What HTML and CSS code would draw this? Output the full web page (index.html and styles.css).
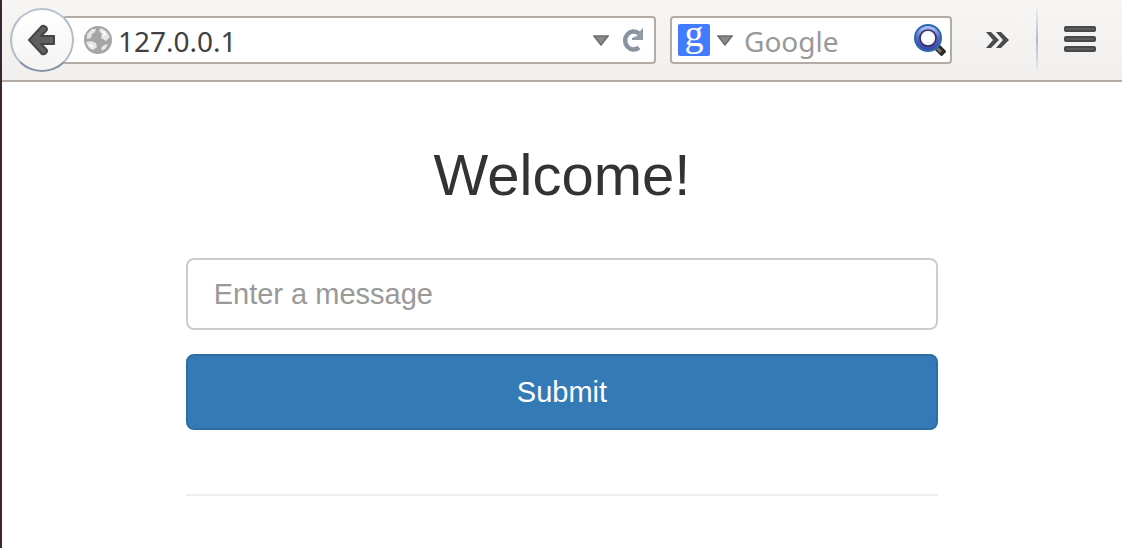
FILE: index.html
```html
<!DOCTYPE html>
<html lang="en">
<head>
<meta charset="utf-8">
<meta name="viewport" content="width=device-width, initial-scale=1">
<title>Welcome!</title>
<link rel="stylesheet" href="styles.css">
</head>
<body>
<div class="window">
  <header class="toolbar">
    <button class="back" type="button" aria-label="Back">
      <svg width="28" height="32" viewBox="0 0 28 32" aria-hidden="true">
        <path d="M1 16L14 2q2-1 4 1t0 4l-5 5h13v8H13l5 5q2 2 0 4t-4 1z" fill="#606060" stroke="#454545" stroke-width="2" stroke-linejoin="round"/>
      </svg>
    </button>
    <div class="field address">
      <svg class="globe" width="28" height="28" viewBox="0 0 28 28" aria-hidden="true">
        <circle cx="14" cy="14" r="14" fill="#a5a5a5"/>
        <path d="M3 8l5-5 4 0-1 3-3 2-1 4-4 1zM17 2l5 3 4 6-4 4-5-3 1-4-3-3zM2 16l5-1 5 2 1 4-4 3-4-2zM20 19l4-1-2 4-4 3-1-3z" fill="#e6e6e6"/>
        <path d="M19 5l2 3-2 2M5 18l4 3" fill="none" stroke="#fafafa" stroke-width="2"/>
      </svg>
      <input class="url" type="text" value="127.0.0.1" aria-label="Address">
      <button class="icon-button" type="button" aria-label="Show history">
        <svg width="16" height="12" viewBox="0 0 16 12" aria-hidden="true"><path d="M1 2h14L8 11z" fill="#8a8a8a" stroke="#6c6c6c" stroke-width="1.500"/></svg>
      </button>
      <button class="icon-button reload" type="button" aria-label="Reload">
        <svg width="24" height="24" viewBox="0 0 24 24" aria-hidden="true"><path d="M18 19.500a8.500 9 0 1 1 0-14" fill="none" stroke="#8793a0" stroke-width="4.500"/><path d="M22 0v12H11v-2l5-2 4-6z" fill="#8f9ba7"/></svg>
      </button>
    </div>
    <div class="field search">
      <button class="icon-button engine" type="button" aria-label="Choose search engine">
        <svg class="engine-logo" width="32" height="32" viewBox="0 0 32 32" aria-hidden="true"><rect width="32" height="32" rx="2" fill="#437bff"/><text class="engine-letter" x="16" y="22" text-anchor="middle">g</text></svg>
        <svg width="16" height="12" viewBox="0 0 16 12" aria-hidden="true"><path d="M1 2h14L8 11z" fill="#8a8a8a" stroke="#6c6c6c" stroke-width="1.500"/></svg>
      </button>
      <input class="query" type="text" placeholder="Google" aria-label="Search">
      <button class="icon-button" type="button" aria-label="Search">
        <svg width="32" height="32" viewBox="0 0 32 32" aria-hidden="true">
          <defs><linearGradient id="ring" x2="0" y2="1"><stop offset="0" stop-color="#a9b8ee"/><stop offset=".5" stop-color="#5967bd"/><stop offset="1" stop-color="#3f47a5"/></linearGradient>
          <radialGradient id="lens"><stop offset=".4" stop-color="#fff"/><stop offset="1" stop-color="#cccccf"/></radialGradient></defs>
          <path d="M23 23l7 7" stroke="#292929" stroke-width="7"/>
          <path d="M23 24l4 4" stroke="#77756c" stroke-width="3"/>
          <circle cx="14" cy="14" r="11" fill="url(#lens)" stroke="#2969b2" stroke-width="6"/>
          <circle cx="14" cy="14" r="10" fill="none" stroke="url(#ring)" stroke-width="4"/>
          <circle cx="14" cy="14" r="8" fill="none" stroke="#292b66" stroke-width="1.500"/>
        </svg>
      </button>
    </div>
    <button class="icon-button more" type="button" aria-label="More tools">
      <svg width="24" height="16" viewBox="0 0 24 16" aria-hidden="true"><path d="M1 0h5l8 8-8 8H1l7-8zM11 0h5l8 8-8 8h-5l7-8z" fill="#4a4a4a"/></svg>
    </button>
    <span class="divider"></span>
    <button class="icon-button" type="button" aria-label="Open menu">
      <svg width="32" height="28" viewBox="0 0 32 28" aria-hidden="true"><g fill="#5d5d5d" stroke="#4a4a4a" stroke-width="2"><rect x="1" y="1" width="30" height="4" rx="1"/><rect x="1" y="11" width="30" height="4" rx="1"/><rect x="1" y="21" width="30" height="4" rx="1"/></g></svg>
    </button>
  </header>
  <main class="content">
    <h1 class="title">Welcome!</h1>
    <form class="form">
      <input class="message" type="text" placeholder="Enter a message" aria-label="Message">
      <button class="submit" type="submit">Submit</button>
    </form>
    <hr class="rule">
  </main>
</div>
</body>
</html>
```
FILE: styles.css
```css
* {
  box-sizing: border-box;
}

body {
  margin: 0;
  background: #fff;
  color: #333;
  font-family: "Liberation Sans", Arial, sans-serif;
}

.window {
  min-height: 100vh;
  border-left: 2px solid #3b2733;
}

.toolbar {
  display: flex;
  align-items: center;
  height: 82px;
  padding: 0 26px 0 8px;
  border-bottom: 2px solid #b3aca6;
  background: linear-gradient(#f7f6f5, #f0efed);
}

.back {
  position: relative;
  z-index: 1;
  display: flex;
  flex: none;
  align-items: center;
  justify-content: center;
  width: 64px;
  height: 64px;
  padding: 0;
  border: 2px solid;
  border-color: #b9c3ce #b1bdc9 #8393a7;
  border-radius: 50%;
  background: linear-gradient(#fff, #f5f4f3);
}

.field {
  display: flex;
  align-items: center;
  height: 48px;
  border: 2px solid #b3aca6;
  border-radius: 4px;
  background: #fff;
}

.address {
  flex: 1;
  min-width: 0;
  margin: 0 14px 0 -12px;
  padding: 0 9px 0 20px;
}

.globe {
  flex: none;
}

.url,
.query {
  flex: 1;
  min-width: 0;
  padding: 2px 0 0;
  border: 0;
  outline: 0;
  background: transparent;
  color: #404040;
  font: 28px/40px "Noto Sans", "Open Sans", sans-serif;
}

.url {
  margin-left: 6px;
}

.query::placeholder {
  color: #999;
  opacity: 1;
}

.icon-button {
  display: flex;
  flex: none;
  align-items: center;
  padding: 0;
  border: 0;
  background: none;
}

.reload {
  margin-left: 12px;
}

.search {
  flex: 0 1 282px;
  min-width: 0;
  padding: 0 4px 0 6px;
}

.engine {
  gap: 7px;
  margin-right: 11px;
}

.engine-logo {
  overflow: visible;
}

.engine-letter {
  fill: #fff;
  font: 38px "Liberation Serif", serif;
}

.more {
  margin: 0 27px 0 33px;
}

.divider {
  width: 2px;
  height: 68px;
  margin-right: 26px;
  background: linear-gradient(#f2f2f2, #b0bbc9, #f0f0f0);
}

.content {
  width: 67.2%;
  margin: 0 auto;
  padding-top: 60px;
}

.title {
  margin: 0 0 50px;
  font-size: 58px;
  font-weight: 400;
  line-height: 66px;
  text-align: center;
}

.form {
  display: grid;
  gap: 24px;
}

.message,
.submit {
  width: 100%;
  border-radius: 8px;
  font: 29px/40px "Liberation Sans", Arial, sans-serif;
}

.message {
  height: 72px;
  padding: 0 26px;
  border: 2px solid #ccc;
  color: #555;
}

.message::placeholder {
  color: #999;
  opacity: 1;
}

.submit {
  padding: 16px 24px;
  border: 2px solid #2e6da4;
  background: #337ab7;
  color: #fff;
}

.rule {
  margin: 64px 0 0;
  border: 0;
  border-top: 2px solid #eee;
}
```
